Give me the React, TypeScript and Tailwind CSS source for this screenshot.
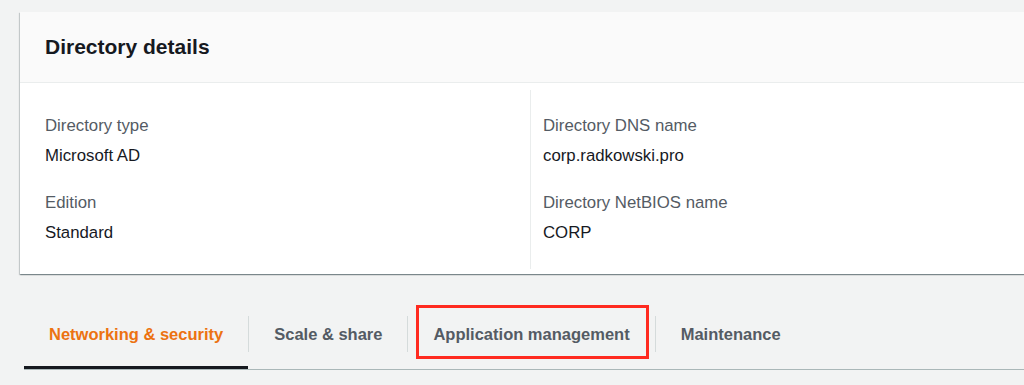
const details = [
  [
    { label: "Directory type", value: "Microsoft AD" },
    { label: "Edition", value: "Standard" },
  ],
  [
    { label: "Directory DNS name", value: "corp.radkowski.pro" },
    { label: "Directory NetBIOS name", value: "CORP" },
  ],
];

const tabs = ["Networking & security", "Scale & share", "Application management", "Maintenance"];

const Field = ({ label, value }: { label: string; value: string }) => (
  <div>
    <p className="text-[16.8px] leading-[22px] text-[#545b64]">{label}</p>
    <p className="mt-[8px] text-[16.8px] leading-[22px] text-[#16191f]">{value}</p>
  </div>
);

const App = () => {
  return (
    <div
      className="w-[1024px] h-[385px] overflow-hidden bg-[#f2f3f3]"
      style={{ fontFamily: '"Liberation Sans", Arial, sans-serif' }}
    >
      <div className="pt-[12px] pl-[20px]">
        <div className="w-[1020px] bg-white shadow-[0_1px_1px_0_rgba(0,28,36,0.3),1px_1px_1px_0_rgba(0,28,36,0.15),-1px_1px_1px_0_rgba(0,28,36,0.15)]">
          <div className="h-[71px] flex items-center px-[25px] bg-[#fafafa] border-b border-[#eaeded]">
            <h2 className="text-[21px] font-bold text-[#16191f]">Directory details</h2>
          </div>
          <div className="grid grid-cols-[510px_1fr] pt-[7px] pb-[5px]">
            {details.map((col, i) => (
              <div
                key={i}
                className={`py-[25px] space-y-[25px] ${i === 0 ? "pl-[25px]" : "pl-[12px] border-l border-[#eaeded]"}`}
              >
                {col.map((f) => (
                  <Field key={f.label} label={f.label} value={f.value} />
                ))}
              </div>
            ))}
          </div>
        </div>
      </div>

      <div className="mt-[24px] ml-[24px] flex border-b border-[#aab7b8]">
        {tabs.map((t, i) => (
          <div key={t} className="relative flex items-center h-[71px]">
            <div
              className={`flex items-center h-[36px] px-[25px] ${i > 0 ? "border-l border-[#d5dbdb]" : ""}`}
            >
              <span
                className={`relative text-[16.5px] leading-[22px] font-bold ${i === 0 ? "text-[#ec7211]" : "text-[#545b64]"}`}
              >
                {t}
                {i === 2 && (
                  <span className="absolute -left-[17px] -right-[19px] -top-[18px] -bottom-[14px] border-[3px] border-[#ff2a1f]" />
                )}
              </span>
            </div>
            {i === 0 && <span className="absolute left-0 right-0 bottom-0 h-[3px] bg-[#16191f]" />}
          </div>
        ))}
      </div>
    </div>
  );
};

export default App;
